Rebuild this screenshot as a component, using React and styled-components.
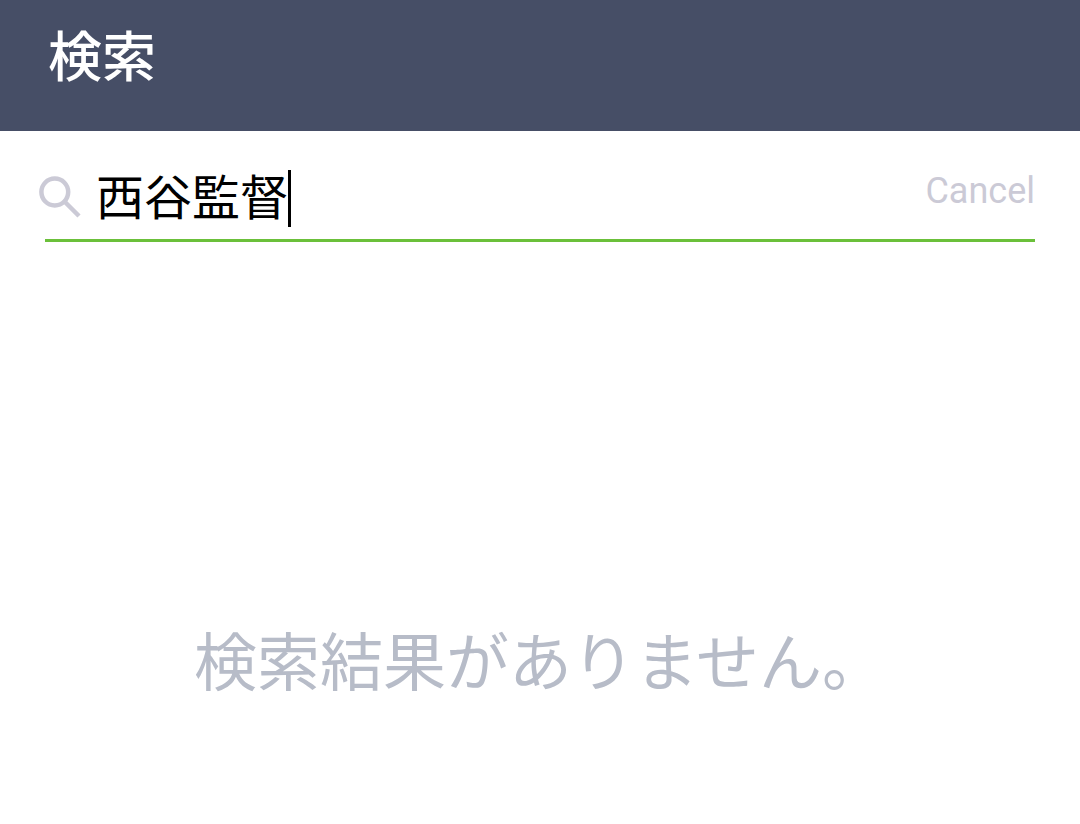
import { useState } from "react";
import styled, { createGlobalStyle } from "styled-components";

export default function App() {
	const [search] = useState("西谷監督");

	return (
		<>
			<GlobalStyle />
			<Header>
				<Title>検索</Title>
			</Header>
			<SearchBar>
				<SearchIcon viewBox="0 0 44 44">
					<circle cx="16.8" cy="17" r="13.4" />
					<path d="M26.5 26.5L41 41" />
				</SearchIcon>
				<Query>{search}</Query>
				<Caret />
				<Cancel>Cancel</Cancel>
			</SearchBar>
			<Message>検索結果がありません。</Message>
		</>
	);
}

const GlobalStyle = createGlobalStyle`
	* {
		box-sizing: border-box;
	}

	body {
		margin: 0;
		background: #fff;
		font-family: Roboto, "Noto Sans CJK JP", sans-serif;
	}
`;
const Header = styled.header`
	height: 131px;
	padding: 20px 0 0 48px;
	background: #464e66;
`;
const Title = styled.h1`
	margin: 0;
	font-weight: 500;
	font-size: 54px;
	line-height: 78px;
	color: #fff;
`;
const SearchBar = styled.div`
	display: flex;
	align-items: flex-start;
	height: 84px;
	margin: 27px 45px 0;
	border-bottom: 3px solid #6bc03a;
`;
const SearchIcon = styled.svg`
	flex: none;
	width: 44px;
	height: 44px;
	margin: 17px 14px 0 -7px;
	fill: none;
	stroke: #cbcad6;
	stroke-width: 4.5;
`;
const Query = styled.span`
	margin-top: 6px;
	font-size: 48px;
	line-height: 70px;
	color: #000;
`;
const Caret = styled.span`
	width: 3px;
	height: 57px;
	margin-top: 12px;
	background: #000;
`;
const Cancel = styled.span`
	margin: 12px 0 0 auto;
	font-size: 36px;
	line-height: 42px;
	color: #cbcad6;
`;
const Message = styled.p`
	margin: 376px 0 0 194px;
	font-size: 63px;
	line-height: 92px;
	color: #b7bcc8;
`;
